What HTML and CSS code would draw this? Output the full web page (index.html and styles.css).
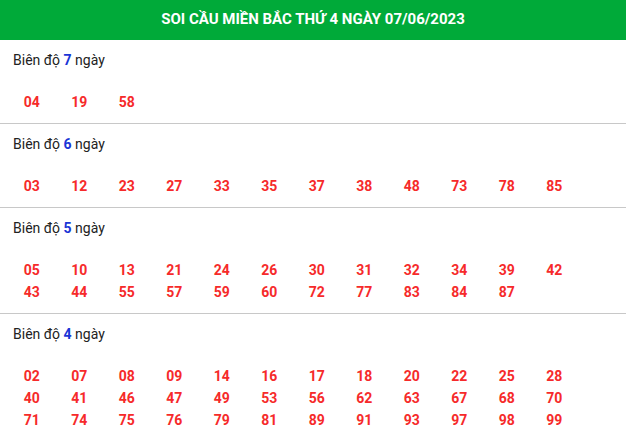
FILE: index.html
```html
<!DOCTYPE html>
<html lang="vi">
<head>
    <meta charset="UTF-8">
    <meta name="viewport" content="width=device-width, initial-scale=1.0">
    <title>Soi cầu miền Bắc</title>
    <link rel="stylesheet" href="styles.css">
</head>
<body>
    <div class="box">
        <h2 class="box-title">SOI CẦU MIỀN BẮC THỨ 4 NGÀY 07/06/2023</h2>

        <div class="range">
            <div class="range-title">Biên độ <b>7</b> ngày</div>
            <div class="nums">
                <span>04</span><span>19</span><span>58</span>
            </div>
        </div>

        <div class="range">
            <div class="range-title">Biên độ <b>6</b> ngày</div>
            <div class="nums">
                <span>03</span><span>12</span><span>23</span><span>27</span><span>33</span><span>35</span>
                <span>37</span><span>38</span><span>48</span><span>73</span><span>78</span><span>85</span>
            </div>
        </div>

        <div class="range">
            <div class="range-title">Biên độ <b>5</b> ngày</div>
            <div class="nums">
                <span>05</span><span>10</span><span>13</span><span>21</span><span>24</span><span>26</span>
                <span>30</span><span>31</span><span>32</span><span>34</span><span>39</span><span>42</span>
                <span>43</span><span>44</span><span>55</span><span>57</span><span>59</span><span>60</span>
                <span>72</span><span>77</span><span>83</span><span>84</span><span>87</span>
            </div>
        </div>

        <div class="range">
            <div class="range-title">Biên độ <b>4</b> ngày</div>
            <div class="nums">
                <span>02</span><span>07</span><span>08</span><span>09</span><span>14</span><span>16</span>
                <span>17</span><span>18</span><span>20</span><span>22</span><span>25</span><span>28</span>
                <span>40</span><span>41</span><span>46</span><span>47</span><span>49</span><span>53</span>
                <span>56</span><span>62</span><span>63</span><span>67</span><span>68</span><span>70</span>
                <span>71</span><span>74</span><span>75</span><span>76</span><span>79</span><span>81</span>
                <span>89</span><span>91</span><span>93</span><span>97</span><span>98</span><span>99</span>
            </div>
        </div>
    </div>
</body>
</html>
```

FILE: styles.css
```css
body {
    margin: 0;
    padding: 0;
    background: #fff;
    font-family: Roboto, "Liberation Sans", sans-serif;
    color: #222;
}

.box {
    width: 626px;
}

.box-title {
    margin: 0;
    height: 40px;
    line-height: 38px;
    background: #00aa39;
    color: #fff;
    font-size: 15px;
    font-weight: bold;
    text-align: center;
}

.range {
    padding: 10px 0;
    border-bottom: 1px solid #c8c8c8;
}

.range:last-child {
    border-bottom: none;
}

.range-title {
    padding-left: 13px;
    height: 20px;
    line-height: 20px;
    font-size: 14px;
}

.range-title b {
    color: #1a35d6;
}

.nums {
    display: grid;
    grid-template-columns: repeat(12, 47.5px);
    margin: 21px 0 0 8px;
}

.nums span {
    height: 22px;
    line-height: 22px;
    text-align: center;
    color: #f62a2a;
    font-size: 14px;
    font-weight: bold;
}
```
